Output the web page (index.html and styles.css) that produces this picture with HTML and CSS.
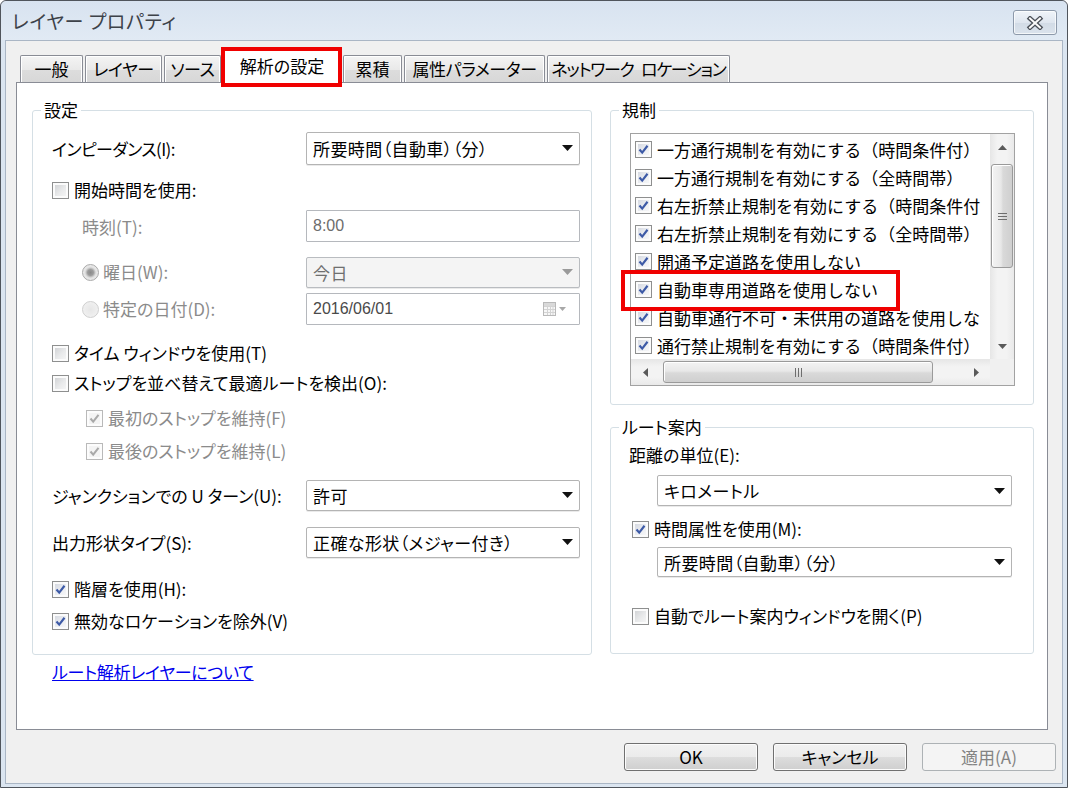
FILE: index.html
```html
<!DOCTYPE html>
<html lang="ja">
<head>
<meta charset="utf-8">
<title>レイヤー プロパティ</title>
<link rel="stylesheet" href="styles.css">
</head>
<body>
<div class="window">
  <div class="titlebar">
    <span class="title">レイヤー プロパティ</span>
    <div class="close">
      <svg width="18" height="14" viewBox="0 0 18 14"><path d="M4 2.5 L14 11.5 M14 2.5 L4 11.5" stroke="#4a4f57" stroke-width="4.6" stroke-linecap="square"/><path d="M4 2.5 L14 11.5 M14 2.5 L4 11.5" stroke="#fbfbfb" stroke-width="2" stroke-linecap="square"/></svg>
    </div>
  </div>
  <div class="client">
    <div class="tabs">
      <div class="tab t-general">一般</div>
      <div class="tab t-layer">レイヤー</div>
      <div class="tab t-source">ソース</div>
      <div class="tab sel t-analysis">解析の設定<span class="mark mark-tab"></span></div>
      <div class="tab t-accum">累積</div>
      <div class="tab t-param">属性パラメーター</div>
      <div class="tab t-netloc">ネットワーク ロケーション</div>
    </div>
    <div class="panel">
      <div class="col-left">
        <div class="group g-settings">
          <span class="group-title">設定</span>
          <div class="row r-imp">
            <span class="lbl">インピーダンス(I):</span>
            <div class="combo c-imp">所要時間（自動車）（分）<svg class="arr" width="11" height="6" viewBox="0 0 11 6"><path d="M0 0H11L5.5 6Z" fill="#111"/></svg></div>
          </div>
          <div class="row r-start">
            <span class="cb"></span><span class="cb-text">開始時間を使用:</span>
          </div>
          <div class="row r-time">
            <span class="lbl lbl-ind dis">時刻(T):</span>
            <div class="textbox tb-dis">8:00</div>
          </div>
          <div class="row r-week">
            <div class="lbl lbl-radio"><span class="radio on-dis"></span><span class="cb-text dis">曜日(W):</span></div>
            <div class="combo combo-dis">今日<svg class="arr" width="11" height="6" viewBox="0 0 11 6"><path d="M0 0H11L5.5 6Z" fill="#9a9a9a"/></svg></div>
          </div>
          <div class="row r-date">
            <div class="lbl lbl-radio"><span class="radio off-dis"></span><span class="cb-text dis">特定の日付(D):</span></div>
            <div class="textbox tb-date">2016/06/01
              <svg class="cal" width="28" height="16" viewBox="0 0 28 16"><rect x="0.5" y="1.5" width="12" height="13" fill="#f7f7f7" stroke="#b9b9b9"/><path d="M1 5.5H12M1 8.5H12M1 11.5H12M4.5 5V14M7.5 5V14M10 5V14" stroke="#d3d3d3" stroke-width="1"/><rect x="1" y="2" width="11" height="3" fill="#d9d9d9"/><path d="M16 6H23L19.5 10Z" fill="#a8a8a8"/></svg>
            </div>
          </div>
          <div class="row r-tw">
            <span class="cb"></span><span class="cb-text">タイム ウィンドウを使用(T)</span>
          </div>
          <div class="row r-stops">
            <span class="cb"></span><span class="cb-text">ストップを並べ替えて最適ルートを検出(O):</span>
          </div>
          <div class="row r-first">
            <span class="cb cb-dis"><svg width="15" height="15" viewBox="0 0 15 15"><path d="M3.5 7.5 L6.2 10.6 L11.5 3.8" stroke="#a9a9a9" stroke-width="2" fill="none"/></svg></span><span class="cb-text dis">最初のストップを維持(F)</span>
          </div>
          <div class="row r-last">
            <span class="cb cb-dis"><svg width="15" height="15" viewBox="0 0 15 15"><path d="M3.5 7.5 L6.2 10.6 L11.5 3.8" stroke="#a9a9a9" stroke-width="2" fill="none"/></svg></span><span class="cb-text dis">最後のストップを維持(L)</span>
          </div>
          <div class="row r-junc">
            <span class="lbl">ジャンクションでの U ターン(U):</span>
            <div class="combo c-small">許可<svg class="arr" width="11" height="6" viewBox="0 0 11 6"><path d="M0 0H11L5.5 6Z" fill="#111"/></svg></div>
          </div>
          <div class="row r-out">
            <span class="lbl">出力形状タイプ(S):</span>
            <div class="combo c-small">正確な形状（メジャー付き）<svg class="arr" width="11" height="6" viewBox="0 0 11 6"><path d="M0 0H11L5.5 6Z" fill="#111"/></svg></div>
          </div>
          <div class="row r-hier">
            <span class="cb on"><svg width="15" height="15" viewBox="0 0 15 15"><path d="M3.5 7.5 L6.2 10.6 L11.5 3.8" stroke="#3d5aa6" stroke-width="2.2" fill="none"/></svg></span><span class="cb-text">階層を使用(H):</span>
          </div>
          <div class="row r-inv">
            <span class="cb on"><svg width="15" height="15" viewBox="0 0 15 15"><path d="M3.5 7.5 L6.2 10.6 L11.5 3.8" stroke="#3d5aa6" stroke-width="2.2" fill="none"/></svg></span><span class="cb-text">無効なロケーションを除外(V)</span>
          </div>
        </div>
        <a class="link" href="#">ルート解析レイヤーについて</a>
      </div>

      <div class="col-right">
        <div class="group g-rules">
          <span class="group-title">規制</span>
          <div class="listbox">
            <div class="list-main">
              <div class="list-view">
                <div class="item"><span class="cb on"><svg width="15" height="15" viewBox="0 0 15 15"><path d="M3.5 7.5 L6.2 10.6 L11.5 3.8" stroke="#3d5aa6" stroke-width="2.2" fill="none"/></svg></span>一方通行規制を有効にする（時間条件付）</div>
                <div class="item"><span class="cb on"><svg width="15" height="15" viewBox="0 0 15 15"><path d="M3.5 7.5 L6.2 10.6 L11.5 3.8" stroke="#3d5aa6" stroke-width="2.2" fill="none"/></svg></span>一方通行規制を有効にする（全時間帯）</div>
                <div class="item"><span class="cb on"><svg width="15" height="15" viewBox="0 0 15 15"><path d="M3.5 7.5 L6.2 10.6 L11.5 3.8" stroke="#3d5aa6" stroke-width="2.2" fill="none"/></svg></span>右左折禁止規制を有効にする（時間条件付</div>
                <div class="item"><span class="cb on"><svg width="15" height="15" viewBox="0 0 15 15"><path d="M3.5 7.5 L6.2 10.6 L11.5 3.8" stroke="#3d5aa6" stroke-width="2.2" fill="none"/></svg></span>右左折禁止規制を有効にする（全時間帯）</div>
                <div class="item"><span class="cb on"><svg width="15" height="15" viewBox="0 0 15 15"><path d="M3.5 7.5 L6.2 10.6 L11.5 3.8" stroke="#3d5aa6" stroke-width="2.2" fill="none"/></svg></span>開通予定道路を使用しない</div>
                <div class="item"><span class="cb on"><svg width="15" height="15" viewBox="0 0 15 15"><path d="M3.5 7.5 L6.2 10.6 L11.5 3.8" stroke="#3d5aa6" stroke-width="2.2" fill="none"/></svg></span>自動車専用道路を使用しない</div>
                <div class="item"><span class="cb on"><svg width="15" height="15" viewBox="0 0 15 15"><path d="M3.5 7.5 L6.2 10.6 L11.5 3.8" stroke="#3d5aa6" stroke-width="2.2" fill="none"/></svg></span>自動車通行不可・未供用の道路を使用しな</div>
                <div class="item"><span class="cb on"><svg width="15" height="15" viewBox="0 0 15 15"><path d="M3.5 7.5 L6.2 10.6 L11.5 3.8" stroke="#3d5aa6" stroke-width="2.2" fill="none"/></svg></span>通行禁止規制を有効にする（時間条件付）</div>
              </div>
              <div class="vscroll">
                <div class="sbtn"><svg width="9" height="5" viewBox="0 0 9 5"><path d="M0 5L4.5 0L9 5Z" fill="#5a5a5a"/></svg></div>
                <div class="vthumb"><svg width="9" height="7" viewBox="0 0 9 7"><path d="M0 0.5H9M0 3.5H9M0 6.5H9" stroke="#6e6e6e" stroke-width="1"/></svg></div>
                <div class="sfill"></div>
                <div class="sbtn"><svg width="9" height="5" viewBox="0 0 9 5"><path d="M0 0L4.5 5L9 0Z" fill="#5a5a5a"/></svg></div>
              </div>
            </div>
            <div class="hscroll-row">
              <div class="hscroll">
                <div class="hbtn"><svg width="5" height="9" viewBox="0 0 5 9"><path d="M5 0L0 4.5L5 9Z" fill="#5a5a5a"/></svg></div>
                <div class="hthumb"><svg width="7" height="9" viewBox="0 0 7 9"><path d="M0.5 0V9M3.5 0V9M6.5 0V9" stroke="#6e6e6e" stroke-width="1"/></svg></div>
                <div class="sfill"></div>
                <div class="hbtn"><svg width="5" height="9" viewBox="0 0 5 9"><path d="M0 0L5 4.5L0 9Z" fill="#5a5a5a"/></svg></div>
              </div>
              <div class="corner"></div>
            </div>
            <span class="mark mark-item"></span>
          </div>
        </div>

        <div class="group g-guide">
          <span class="group-title">ルート案内</span>
          <div class="row r-dist"><span class="cb-text">距離の単位(E):</span></div>
          <div class="combo c-guide c-km">キロメートル<svg class="arr" width="11" height="6" viewBox="0 0 11 6"><path d="M0 0H11L5.5 6Z" fill="#111"/></svg></div>
          <div class="row r-tattr">
            <span class="cb on"><svg width="15" height="15" viewBox="0 0 15 15"><path d="M3.5 7.5 L6.2 10.6 L11.5 3.8" stroke="#3d5aa6" stroke-width="2.2" fill="none"/></svg></span><span class="cb-text">時間属性を使用(M):</span>
          </div>
          <div class="combo c-guide c-tm">所要時間（自動車）（分）<svg class="arr" width="11" height="6" viewBox="0 0 11 6"><path d="M0 0H11L5.5 6Z" fill="#111"/></svg></div>
          <div class="row r-auto">
            <span class="cb"></span><span class="cb-text">自動でルート案内ウィンドウを開く(P)</span>
          </div>
        </div>
      </div>
    </div>
    <div class="buttons">
      <div class="btn">OK</div>
      <div class="btn">キャンセル</div>
      <div class="btn btn-dis">適用(A)</div>
    </div>
  </div>
</div>
</body>
</html>
```

FILE: styles.css
```css
* { box-sizing: border-box; }
html, body { margin: 0; padding: 0; }
body {
  width: 1068px;
  height: 788px;
  overflow: hidden;
  font-family: "Noto Sans CJK JP", "Noto Sans", sans-serif;
  font-size: 17px;
  color: #000;
  font-feature-settings: "palt";
  background: #fff;
}
.window {
  width: 1068px;
  height: 788px;
  border: 1px solid #50555c;
  border-radius: 6px 6px 0 0;
  background: #dbe5f0;
  padding: 0 4px 3px 4px;
  display: flex;
  flex-direction: column;
}
.titlebar {
  height: 39px;
  flex: none;
  display: flex;
  align-items: flex-start;
  background: linear-gradient(#d8e3f0, #e1eaf4);
  margin: 0 -4px;
  padding: 0 10px 0 11px;
  border-radius: 6px 6px 0 0;
}
.title {
  font-size: 19px;
  line-height: 22px;
  margin-top: 9px;
  color: #3d4249;
  letter-spacing: 0.6px;
}
.close {
  margin-left: auto;
  margin-top: 9px;
  width: 44px;
  height: 25px;
  border: 1px solid #8d99aa;
  border-radius: 3px;
  background: linear-gradient(#f0f4f9, #dfe6ef 50%, #d2dbe6 51%, #dbe3ec);
  box-shadow: inset 0 0 0 1px rgba(255,255,255,0.7);
  display: flex;
  align-items: center;
  justify-content: center;
}
.client {
  flex: 1;
  background: #f0f0f0;
  border: 1px solid #aab6c5;
  padding: 9px 10px 0 10px;
  display: flex;
  flex-direction: column;
}

/* tabs */
.tabs {
  display: flex;
  align-items: flex-end;
  height: 33px;
  gap: 2px;
  margin-left: 4px;
  margin-bottom: -1px;
}
.tab {
  height: 28px;
  border: 1px solid #898c95;
  border-bottom: none;
  border-radius: 2px 2px 0 0;
  background: linear-gradient(#f4f4f4, #e9e9e9 50%, #dddddd 51%, #d7d7d7);
  box-shadow: inset 1px 1px 0 #fff, inset -1px 0 0 #fff;
  display: flex;
  align-items: center;
  justify-content: center;
  line-height: 20px;
  padding-bottom: 1px;
  white-space: nowrap;
}
.t-general { width: 63px; }
.t-layer { width: 77px; letter-spacing: -0.5px; }
.t-source { width: 57px; letter-spacing: -0.5px; }
.t-analysis { width: 118px; }
.t-accum { width: 59px; }
.t-param { width: 141px; letter-spacing: -0.4px; }
.t-netloc { width: 183px; letter-spacing: -1.3px; word-spacing: 5px; }
.tab.sel {
  height: 33px;
  background: #fff;
  box-shadow: none;
  position: relative;
  z-index: 2;
  padding-bottom: 3px;
}
.mark {
  position: absolute;
  border: 4px solid #f00000;
  pointer-events: none;
}
.mark-tab {
  left: -3px;
  top: -4px;
  right: -2px;
  bottom: -4px;
}

/* panel */
.panel {
  width: 1032px;
  height: 648px;
  border: 1px solid #898c95;
  background: #fff;
  display: flex;
  gap: 18px;
  padding: 27px 13px 0 15px;
}
.col-left { width: 560px; display: flex; flex-direction: column; }
.col-right { width: 424px; display: flex; flex-direction: column; }

.group {
  border: 1px solid #d5dfe5;
  border-radius: 3px;
  display: flex;
  flex-direction: column;
}
.group-title {
  display: block;
  align-self: flex-start;
  height: 20px;
  line-height: 20px;
  margin: -11px 0 0 8px;
  padding: 0 3px;
  background: #fff;
}

.row {
  display: flex;
  align-items: center;
  height: 24px;
  padding-left: 19px;
  white-space: nowrap;
}
.lbl { width: 254px; flex: none; display: flex; align-items: center; }
.lbl-ind { padding-left: 30px; }
.lbl-radio { padding-left: 30px; }
.dis { color: #8b8b8b; }
.cb-text { margin-left: 5px; line-height: 20px; }
.lbl .cb-text { margin-left: 4px; }
.r-imp .lbl { letter-spacing: -0.6px; }

/* left group rows */
.g-settings { padding-bottom: 21px; }
.r-imp { margin-top: 11px; height: 34px; }
.r-start { margin-top: 13px; }
.r-time { margin-top: 8px; height: 32px; }
.r-week { margin-top: 14px; height: 32px; }
.r-date { margin-top: 5px; height: 32px; }
.r-tw { margin-top: 16px; }
.r-stops { margin-top: 6px; }
.r-first { margin-top: 11px; padding-left: 53px; }
.r-last { margin-top: 9px; padding-left: 53px; }
.r-junc { margin-top: 16px; height: 32px; }
.r-out { margin-top: 15px; height: 32px; }
.r-hier { margin-top: 19px; }
.r-inv { margin-top: 8px; }

/* controls */
.combo {
  width: 274px;
  height: 31px;
  flex: none;
  border: 1px solid #b4b4b4;
  border-radius: 2px;
  background: #fff;
  display: flex;
  align-items: center;
  padding-left: 6px;
  white-space: nowrap;
  box-shadow: 0 1px 0 #eaeaea;
  letter-spacing: 0.4px;
}
.c-imp { height: 33px; }
.combo .arr { margin-left: auto; margin-right: 6px; flex: none; }
.combo-dis {
  background: #f4f4f4;
  border-color: #b9bcc0;
  color: #6f6f6f;
}
.textbox {
  width: 274px;
  height: 32px;
  flex: none;
  border: 1px solid #b5b8bd;
  border-radius: 1px;
  background: #fff;
  display: flex;
  align-items: center;
  padding-left: 6px;
  font-family: "Liberation Sans", "Noto Sans CJK JP", sans-serif;
  font-size: 16px;
}
.tb-dis { color: #6d6d6d; }
.tb-date { color: #4a4a4a; }
.cal { margin-left: auto; margin-right: 8px; }

.cb {
  width: 17px;
  height: 17px;
  flex: none;
  border: 1px solid #8e8f8f;
  background: linear-gradient(135deg, #cbcdd0 0%, #e9eaeb 55%, #f8f8f8 100%);
  box-shadow: inset 0 0 0 2px #fbfbfb;
  display: inline-flex;
  align-items: center;
  justify-content: center;
}
.cb.on {
  background: linear-gradient(135deg, #cfd3dc 0%, #eceef2 55%, #fafafa 100%);
}
.cb-dis {
  border-color: #b9b9b9;
  background: #f4f4f4;
  box-shadow: inset 0 0 0 2px #fcfcfc;
}
.radio {
  width: 17px;
  height: 17px;
  flex: none;
  border-radius: 50%;
  display: inline-flex;
  align-items: center;
  justify-content: center;
}
.on-dis {
  border: 1px solid #a9a9a9;
  background: radial-gradient(circle, #8a8a8a 0, #9d9d9d 3px, #c9c9c9 4.5px, #e2e2e2 5.5px, #f6f6f6 100%);
}
.off-dis {
  border: 1px solid #cfcfcf;
  background: radial-gradient(circle, #e6e6e6 0, #f4f4f4 100%);
}

.link {
  margin: 7px 0 0 20px;
  line-height: 20px;
  color: #0000ee;
  text-decoration: underline;
  align-self: flex-start;
  letter-spacing: -0.3px;
}

/* rules group */
.g-rules { padding-bottom: 18px; }
.listbox {
  position: relative;
  margin: 13px 0 0 19px;
  width: 385px;
  height: 253px;
  border: 1px solid #a2a2a2;
  display: flex;
  flex-direction: column;
}
.list-main { flex: 1; display: flex; min-height: 0; }
.list-view {
  flex: 1;
  overflow: hidden;
  padding-top: 1px;
}
.item {
  height: 28px;
  display: flex;
  align-items: center;
  padding-left: 4px;
  gap: 5px;
  white-space: nowrap;
  font-feature-settings: normal;
}
.vscroll {
  width: 24px;
  flex: none;
  display: flex;
  flex-direction: column;
  background: linear-gradient(to right, #e6e6e6, #f3f3f3 30%, #f3f3f3 70%, #e9e9e9);
}
.sbtn {
  height: 26px;
  display: flex;
  align-items: center;
  justify-content: center;
  flex: none;
}
.vthumb {
  margin: 4px 1px 0 1px;
  height: 104px;
  border: 1px solid #9a9a9a;
  border-radius: 3px;
  background: linear-gradient(to right, #f3f3f3, #e8e8e8 45%, #d9d9d9 55%, #cfcfcf);
  box-shadow: inset 1px 1px 0 #fff;
  display: flex;
  align-items: center;
  justify-content: center;
  flex: none;
}
.sfill { flex: 1; }
.hscroll-row { height: 26px; flex: none; display: flex; }
.hscroll {
  flex: 1;
  display: flex;
  background: linear-gradient(#e6e6e6, #f3f3f3 30%, #f3f3f3 70%, #e9e9e9);
}
.hbtn {
  width: 28px;
  display: flex;
  align-items: center;
  justify-content: center;
  flex: none;
}
.hthumb {
  margin: 2px 0 2px 4px;
  width: 270px;
  border: 1px solid #9a9a9a;
  border-radius: 3px;
  background: linear-gradient(#f3f3f3, #e8e8e8 45%, #d9d9d9 55%, #cfcfcf);
  box-shadow: inset 1px 1px 0 #fff;
  display: flex;
  align-items: center;
  justify-content: center;
  flex: none;
}
.corner { width: 24px; flex: none; background: #f0f0f0; }
.mark-item {
  left: -10px;
  top: 136px;
  width: 279px;
  height: 41px;
}

/* guide group */
.g-guide { margin-top: 22px; padding-bottom: 25px; }
.r-dist { margin-top: 6px; padding-left: 14px; }
.r-dist .cb-text { margin-left: 4px; }
.c-guide { width: 355px; margin-left: 46px; }
.c-km { margin-top: 8px; height: 31px; }
.r-tattr { margin-top: 11px; padding-left: 21px; }
.c-tm { margin-top: 6px; height: 30px; }
.r-auto { margin-top: 27px; padding-left: 21px; }

/* buttons */
.buttons {
  display: flex;
  justify-content: flex-end;
  gap: 15px;
  margin-top: 13px;
  margin-right: -4px;
}
.btn {
  width: 134px;
  height: 28px;
  border: 1px solid #707070;
  border-radius: 3px;
  background: linear-gradient(#f2f2f2, #ebebeb 50%, #dddddd 51%, #cfcfcf);
  box-shadow: inset 0 0 0 1px #fcfcfc;
  display: flex;
  align-items: center;
  justify-content: center;
  line-height: 20px;
}
.btn-dis {
  border-color: #adb2b5;
  background: #f4f4f4;
  box-shadow: none;
  color: #838383;
}
```
